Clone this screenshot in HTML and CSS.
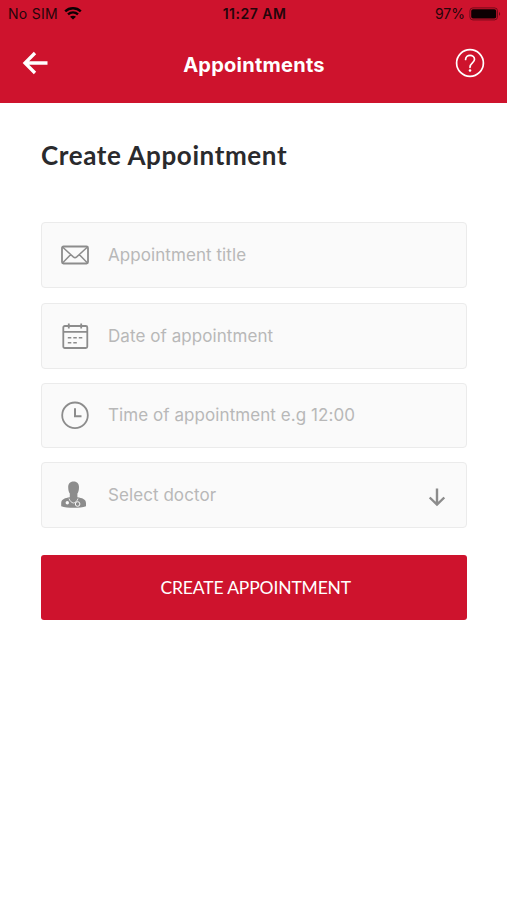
FILE: index.html
```html
<!DOCTYPE html>
<html lang="en">
<head>
    <meta charset="UTF-8">
    <meta name="viewport" content="width=device-width, initial-scale=1.0">
    <title>Appointments</title>
    <link rel="stylesheet" href="styles.css">
</head>
<body>
    <header class="header">
        <!-- Status Bar -->
        <div class="status-bar">
            <div class="status-left">
                <span class="carrier">No SIM</span>
                <svg class="wifi" viewBox="0 0 18 13" width="18" height="13">
                    <path d="M1.2 4.4C5.6.2 12.4.2 16.8 4.4M4 7.4c2.9-2.6 7.1-2.6 10 0" fill="none" stroke="currentColor" stroke-width="2.4"/>
                    <path d="M6 9.7c1.8-1.4 4.2-1.4 6 0L9 12.6z" fill="currentColor"/>
                </svg>
            </div>
            <span class="clock">11:27 AM</span>
            <div class="status-right">
                <span class="percent">97%</span>
                <svg class="battery" viewBox="0 0 32 14" width="32" height="14">
                    <rect x=".9" y=".9" width="27.6" height="12" rx="3" fill="none" stroke="currentColor" stroke-opacity=".45"/>
                    <rect x="2.2" y="2.2" width="25" height="9.4" rx="1.8" fill="currentColor"/>
                    <path d="M30 5c1.5.6 1.5 3.2 0 3.8z" fill="currentColor" fill-opacity=".5"/>
                </svg>
            </div>
        </div>

        <!-- Navigation -->
        <div class="nav-bar">
            <svg class="back" viewBox="0 0 26 24" width="26" height="24">
                <path d="M25.5 12H3M13 2L3 12l10 10" fill="none" stroke="#fff" stroke-width="3.3"/>
            </svg>
            <span class="nav-title">Appointments</span>
            <svg class="help" viewBox="0 0 30 30" width="30" height="30">
                <circle cx="15" cy="15" r="13.4" fill="none" stroke="#fff" stroke-width="1.7"/>
                <path d="M10.6 11.5c0-5.7 8.900-5.500 8.900-.2 0 3.700-4.500 3.500-4.500 8" fill="none" stroke="#fff" stroke-width="1.7" stroke-linecap="round"/>
                <circle cx="15" cy="22.5" r="1.3" fill="#fff"/>
            </svg>
        </div>
    </header>

    <main class="content">
        <h1>Create Appointment</h1>

        <div class="field field-title">
            <svg class="icon" viewBox="0 0 30 30" width="30" height="30">
                <g fill="none" stroke="currentColor" stroke-width="1.8">
                    <rect x="2" y="6.5" width="26" height="17" rx="1.5"/>
                    <path d="M2.500 7l10.800 9.900q1.700 1.400 3.400 0L27.500 7M2.500 23l8.300-8.500M27.500 23l-8.300-8.500" stroke-width="1.5"/>
                </g>
            </svg>
            <span class="placeholder">Appointment title</span>
        </div>

        <div class="field">
            <svg class="icon" viewBox="0 0 30 30" width="30" height="30">
                <g fill="none" stroke="currentColor" stroke-width="1.8">
                    <rect x="3.3" y="5" width="24" height="22" rx="1.5"/>
                    <path d="M3.3 10.800h24M8.800 2.500V7.500M21.200 2.500V7.500"/>
                    <path d="M7.800 16.800h3.500M13.300 16.800h3.500M18.800 16.800h3.500M7.800 21.700h3.500M13.300 21.700h3.500" stroke-width="1.5"/>
                </g>
            </svg>
            <span class="placeholder">Date of appointment</span>
        </div>

        <div class="field">
            <svg class="icon" viewBox="0 0 30 30" width="30" height="30">
                <g fill="none" stroke="currentColor" stroke-width="1.8">
                    <circle cx="15" cy="15.3" r="12.8"/>
                    <path d="M15 8.3v8h6.500" stroke-width="2"/>
                </g>
            </svg>
            <span class="placeholder">Time of appointment e.g 12:00</span>
        </div>

        <div class="field">
            <svg class="icon" viewBox="0 0 30 30" width="30" height="30">
                <path d="M8.2 7c0-7.200 10.800-7.200 10.800 0 0 3.500-.7 5.300-1.600 6.500v3.700c4.500.8 8.600 1.600 8.600 6v3c-6 2.200-18.800 2.200-24.800 0v-3c0-4.400 4.100-5.200 8.600-6v-3.700c-.9-1.200-1.600-3-1.600-6.500z" fill="currentColor"/>
                <g fill="none" stroke="#fafafa">
                    <path d="M9 18.500c.8 2.500 2.500 4.200 4.500 4.500 2-.3 3.700-2 4.500-4.500" stroke-width=".8"/>
                    <circle cx="17.600" cy="24" r="2.300" stroke-width="1"/>
                </g>
                <circle cx="7.300" cy="22.800" r="1.700" fill="#fafafa"/>
            </svg>
            <span class="placeholder">Select doctor</span>
            <svg class="arrow" viewBox="0 0 18 20" width="18" height="20">
                <path d="M9 1.500v16M1.700 10.500L9 17.600l7.300-7.100" fill="none" stroke="currentColor" stroke-width="2.4"/>
            </svg>
        </div>

        <button class="submit">CREATE APPOINTMENT</button>
    </main>
</body>
</html>
```
FILE: styles.css
```css
* {
    box-sizing: border-box;
}

body {
    margin: 0;
    background-color: #ffffff;
    font-family: Inter, "Liberation Sans", sans-serif;
}

svg {
    display: block;
    flex-shrink: 0;
}

.header {
    height: 103px;
    background-color: #ce132d;
}

.status-bar {
    display: grid;
    grid-template-columns: 1fr auto 1fr;
    align-items: center;
    height: 27px;
    padding: 0 6px 0 8px;
    font-size: 14px;
    color: #24050a;
    white-space: nowrap;
}

.status-left,
.status-right {
    display: flex;
    align-items: center;
}

.status-left {
    gap: 6px;
}

.status-right {
    justify-content: flex-end;
    gap: 4px;
}

.carrier {
    letter-spacing: 0.3px;
}

.wifi,
.battery {
    color: #0c0002;
}

.clock {
    font-weight: 600;
    letter-spacing: 0.5px;
}

.nav-bar {
    display: flex;
    align-items: center;
    justify-content: space-between;
    height: 72px;
    padding: 0 22px;
}

.nav-title {
    padding: 4px 0 0 5px;
    color: #ffffff;
    font-size: 20px;
    font-weight: 700;
    letter-spacing: 0.25px;
}

.content {
    padding: 33px 40.5px 0 41px;
}

h1 {
    margin: 0 0 48px;
    font-family: Lato, sans-serif;
    font-size: 26px;
    font-weight: 700;
    line-height: 38px;
    letter-spacing: 0.6px;
    color: #2a2a2d;
}

.field {
    display: flex;
    align-items: center;
    height: 65.5px;
    margin-bottom: 14px;
    padding: 0 20px 0 18px;
    border: 1.5px solid #ebebeb;
    border-radius: 4px;
    background-color: #fafafa;
    color: #8c8c8c;
}

.field-title {
    margin-bottom: 15.5px;
}

.placeholder {
    margin-left: 18px;
    color: #b8b8b8;
    font-size: 17px;
    letter-spacing: 0.07px;
}

.arrow {
    margin-left: auto;
    margin-top: 4px;
}

.submit {
    display: block;
    width: 100%;
    height: 65px;
    margin-top: 27px;
    padding: 0 0 0 4px;
    border: none;
    border-radius: 3px;
    background-color: #ce132d;
    color: #ffffff;
    font-family: Lato, sans-serif;
    font-size: 17.5px;
    letter-spacing: -0.15px;
}
```
